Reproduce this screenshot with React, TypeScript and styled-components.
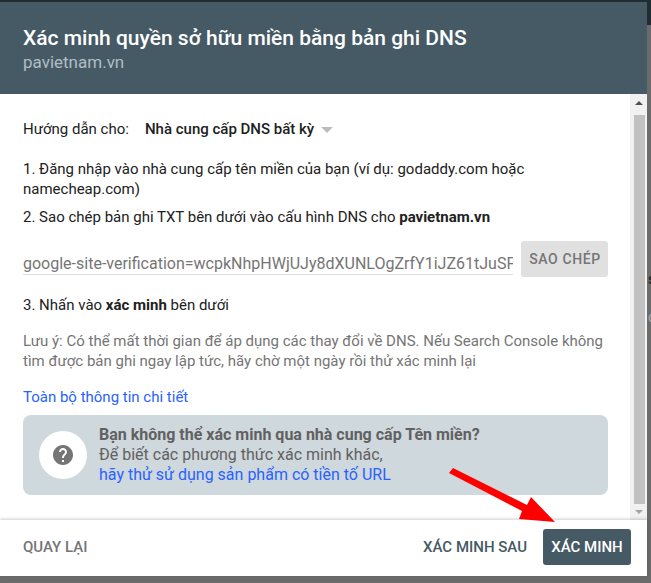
import styled, { createGlobalStyle } from 'styled-components';

const GlobalStyle = createGlobalStyle`
  html, body {
    margin: 0;
    padding: 0;
    background: #666;
  }

  body {
    font-family: Roboto, "Liberation Sans", sans-serif;
    -webkit-font-smoothing: antialiased;
  }
`;

export default function App() {
  return (
    <Page>
      <GlobalStyle />
      <BackdropGlyph $top={271} $color='#222'>s</BackdropGlyph>
      <BackdropGlyph $top={309} $color='#9aa0a6'>ó</BackdropGlyph>

      <Modal>
        <Header>
          <Title>Xác minh quyền sở hữu miền bằng bản ghi DNS</Title>
          <Subtitle>pavietnam.vn</Subtitle>
        </Header>

        <Middle>
          <Content>
            <ProviderRow>
              <span>Hướng dẫn cho:</span>
              <Provider>Nhà cung cấp DNS bất kỳ</Provider>
              <Caret />
            </ProviderRow>

            <Step $top={20}>
              1. Đăng nhập vào nhà cung cấp tên miền của bạn (ví dụ: godaddy.com hoặc namecheap.com)
            </Step>
            <Step $top={8}>
              2. Sao chép bản ghi TXT bên dưới vào cấu hình DNS cho <b>pavietnam.vn</b>
            </Step>

            <CopyRow>
              <TokenField>google-site-verification=wcpkNhpHWjUJy8dXUNLOgZrfY1iJZ61tJuSF</TokenField>
              <CopyButton>SAO CHÉP</CopyButton>
            </CopyRow>

            <Step $top={18}>
              3. Nhấn vào <b>xác minh</b> bên dưới
            </Step>

            <Note>
              Lưu ý: Có thể mất thời gian để áp dụng các thay đổi về DNS. Nếu Search Console không
              tìm được bản ghi ngay lập tức, hãy chờ một ngày rồi thử xác minh lại
            </Note>

            <DetailLink>Toàn bộ thông tin chi tiết</DetailLink>

            <InfoBox>
              <HelpCircle>
                <svg width='24' height='24' viewBox='0 0 24 24' fill='#757575'>
                  <path d='M12 2C6.48 2 2 6.48 2 12s4.48 10 10 10 10-4.48 10-10S17.52 2 12 2zm1 17h-2v-2h2v2zm2.07-7.75l-.9.92C13.45 12.9 13 13.5 13 15h-2v-.5c0-1.1.45-2.1 1.17-2.83l1.24-1.26c.37-.36.59-.86.59-1.41 0-1.1-.9-2-2-2s-2 .9-2 2H8c0-2.21 1.79-4 4-4s4 1.79 4 4c0 .88-.36 1.68-.93 2.25z' />
                </svg>
              </HelpCircle>
              <InfoText>
                <InfoTitle>Bạn không thể xác minh qua nhà cung cấp Tên miền?</InfoTitle>
                <div>Để biết các phương thức xác minh khác,</div>
                <InfoLink>hãy thử sử dụng sản phẩm có tiền tố URL</InfoLink>
              </InfoText>
            </InfoBox>
          </Content>

          <ScrollBar>
            <ScrollArrow $up />
            <ScrollThumb />
            <ScrollArrow />
          </ScrollBar>
        </Middle>

        <Footer>
          <BackButton>QUAY LẠI</BackButton>
          <FooterRight>
            <LaterButton>XÁC MINH SAU</LaterButton>
            <VerifyButton>XÁC MINH</VerifyButton>
          </FooterRight>
        </Footer>
      </Modal>

      {/* red arrow annotation pasted on top of the screenshot */}
      <Arrow width='651' height='583' viewBox='0 0 651 583'>
        <polygon points='449,473 453,468 527,505 531,497 555,522 519,519 522,511' fill='#ff0000' />
      </Arrow>
    </Page>
  );
}

const Page = styled.div`
  position: relative;
  width: 651px;
  height: 583px;
  overflow: hidden;
  padding-top: 2px;
  box-sizing: border-box;
  background: linear-gradient(#1f2d33 25px, #6b6b6b 25px);
`;

const BackdropGlyph = styled.span<{ $top: number; $color: string }>`
  position: absolute;
  top: ${(props) => props.$top}px;
  left: 648px;
  font-size: 14px;
  font-weight: 500;
  color: ${(props) => props.$color};
`;

const Modal = styled.div`
  position: relative;
  display: flex;
  flex-direction: column;
  width: 647px;
  height: 574px;
  background: #fff;
  color: #212121;
  font-size: 15px;
  line-height: 20px;
`;

const Header = styled.div`
  height: 92px;
  flex: none;
  box-sizing: border-box;
  padding: 24px 23px 0;
  background: #465a65;
`;

const Title = styled.div`
  font-size: 21px;
  font-weight: 500;
  line-height: 24px;
  color: #fff;
`;

const Subtitle = styled.div`
  margin-top: 1px;
  font-size: 17px;
  line-height: 22px;
  color: #b0bec5;
`;

const Middle = styled.div`
  display: flex;
  height: 426px;
  flex: none;
`;

const Content = styled.div`
  width: 585px;
  flex: none;
  margin-right: 22px;
  padding: 25px 0 0 23px;
`;

const ProviderRow = styled.div`
  display: flex;
  align-items: center;
`;

const Provider = styled.span`
  margin-left: 16px;
  font-weight: 500;
`;

const Caret = styled.span`
  width: 0;
  height: 0;
  margin: 1px 0 0 7px;
  border-top: 6px solid #bdbdbd;
  border-left: 6.5px solid transparent;
  border-right: 6.5px solid transparent;
`;

const Step = styled.div<{ $top: number }>`
  margin-top: ${(props) => props.$top}px;

  b {
    font-weight: 700;
  }
`;

const CopyRow = styled.div`
  display: flex;
  justify-content: space-between;
  align-items: flex-start;
  margin-top: 14px;
`;

const TokenField = styled.div`
  width: 490px;
  height: 34px;
  box-sizing: border-box;
  padding-top: 12px;
  overflow: hidden;
  white-space: nowrap;
  font-size: 16px;
  line-height: 21px;
  color: #757575;
  border-bottom: 1px solid #e0e0e0;
`;

const CopyButton = styled.div`
  display: flex;
  align-items: center;
  justify-content: center;
  width: 87px;
  height: 36px;
  padding-left: 1px;
  box-sizing: border-box;
  border-radius: 3px;
  background: #e0e0e0;
  color: #757575;
  font-weight: 500;
  font-size: 14px;
  letter-spacing: 0.6px;
`;

const Note = styled.div`
  margin-top: 16px;
  color: #757575;
`;

const DetailLink = styled.div`
  margin-top: 16px;
  color: #2962ff;
`;

const InfoBox = styled.div`
  display: flex;
  align-items: center;
  height: 80px;
  margin-top: 8px;
  padding-left: 16px;
  border-radius: 8px;
  background: #cfd8dc;
  color: #616161;
  font-size: 16px;
`;

const HelpCircle = styled.div`
  display: flex;
  align-items: center;
  justify-content: center;
  width: 48px;
  height: 48px;
  flex: none;
  border-radius: 50%;
  background: #fff;
`;

const InfoText = styled.div`
  margin-left: 12px;
`;

const InfoTitle = styled.div`
  font-weight: 700;
`;

const InfoLink = styled.div`
  color: #2962ff;
`;

const ScrollBar = styled.div`
  display: flex;
  flex-direction: column;
  align-items: center;
  width: 17px;
  flex: none;
  padding-left: 1px;
  box-sizing: border-box;
  background: #f1f1f1;
`;

const ScrollArrow = styled.div<{ $up?: boolean }>`
  width: 0;
  height: 0;
  margin: ${(props) => (props.$up ? '7px 0 10px' : '6px 0 0')};
  border-left: 4px solid transparent;
  border-right: 4px solid transparent;
  border-bottom: ${(props) => (props.$up ? '4px solid #505050' : 'none')};
  border-top: ${(props) => (props.$up ? 'none' : '4px solid #a3a3a3')};
`;

const ScrollThumb = styled.div`
  width: 11px;
  height: 389px;
  background: #c1c1c1;
`;

const Footer = styled.div`
  position: relative;
  display: flex;
  flex: 1;
  align-items: center;
  justify-content: space-between;
  padding: 0 16px 2px 23px;
  background: #fff;
  box-shadow: 0 -1px 3px rgba(0, 0, 0, 0.2);
  font-weight: 500;
`;

const BackButton = styled.div`
  color: #757575;
`;

const FooterRight = styled.div`
  display: flex;
  align-items: center;
  gap: 16px;
`;

const LaterButton = styled.div`
  color: #455a64;
`;

const VerifyButton = styled.div`
  display: flex;
  align-items: center;
  justify-content: center;
  width: 88px;
  height: 36px;
  border-radius: 3px;
  background: #455a64;
  color: #fff;
`;

const Arrow = styled.svg`
  position: absolute;
  top: 0;
  left: 0;
  pointer-events: none;
`;
